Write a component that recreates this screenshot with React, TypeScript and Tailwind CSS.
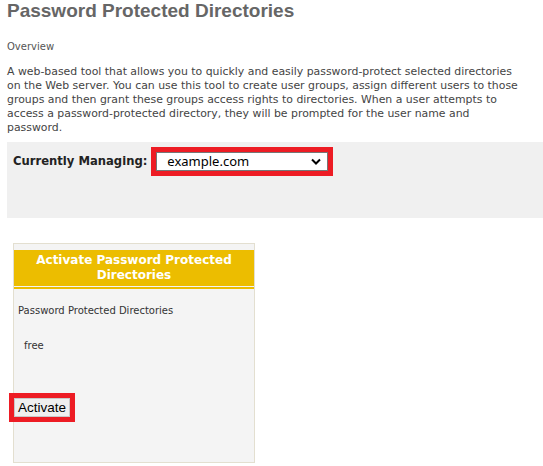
export default function App() {
  return (
    <div className="min-h-[466px] w-[543px] bg-white pl-[7px] pt-[0px] font-['DejaVu_Sans',Verdana,sans-serif] text-[#333]">
      <h1 className="font-['Liberation_Sans',Arial,sans-serif] text-[19px] font-bold leading-[22px] text-[#666]">
        Password Protected Directories
      </h1>
      <p className="mt-[18px] text-[10px] leading-[14px] text-[#555]">Overview</p>
      <p className="mt-[11px] whitespace-nowrap text-[10.9px] leading-[14px] text-[#444]">
        A web-based tool that allows you to quickly and easily password-protect selected directories
        <br />
        on the Web server. You can use this tool to create user groups, assign different users to those
        <br />
        groups and then grant these groups access rights to directories. When a user attempts to
        <br />
        access a password-protected directory, they will be prompted for the user name and
        <br />
        password.
      </p>
      <div className="mt-[7px] h-[76px] bg-[#f0f0f0] pl-[6px] pt-[5px]">
        <div className="flex items-center gap-[4px]">
          <span className="text-[11.6px] font-bold text-[#222]">Currently Managing:</span>
          <div className="border-[5px] border-[#ed1c24]">
            <div className="flex h-[19px] w-[172px] items-center justify-between border border-[#767676] bg-white pl-[10px] pr-[6px] font-['Noto_Sans',sans-serif] text-[13px] text-black">
              <span>example.com</span>
              <svg width="10" height="7" viewBox="0 0 10 7">
                <path d="M1 1.5 L5 5.5 L9 1.5" fill="none" stroke="#000" strokeWidth="2" />
              </svg>
            </div>
          </div>
        </div>
      </div>
      <div className="ml-[6px] mt-[25px] flex h-[220px] w-[242px] flex-col border border-[#e3dfd0] bg-[#f4f4f4] pt-[6px]">
        <div className="flex h-[36px] items-center justify-center bg-[#ecbd00] px-[10px] text-center text-[12px] font-bold leading-[15px] text-white">
          Activate Password Protected Directories
        </div>
        <div className="mt-[1px] h-[2px] bg-[#ecbd00]" />
        <p className="ml-[4px] mt-[14px] text-[10px] text-[#333]">Password Protected Directories</p>
        <p className="ml-[10px] mt-[20px] text-[10px] text-[#333]">free</p>
        <div className="-ml-[5px] mt-[40px] w-fit border-[5px] border-[#ed1c24]">
          <button className="block h-[19px] border border-[#c8c8c8] bg-[#efefef] px-[3px] font-['Liberation_Sans',Arial,sans-serif] text-[13.5px] leading-[16px] text-black">
            Activate
          </button>
        </div>
      </div>
    </div>
  );
}
